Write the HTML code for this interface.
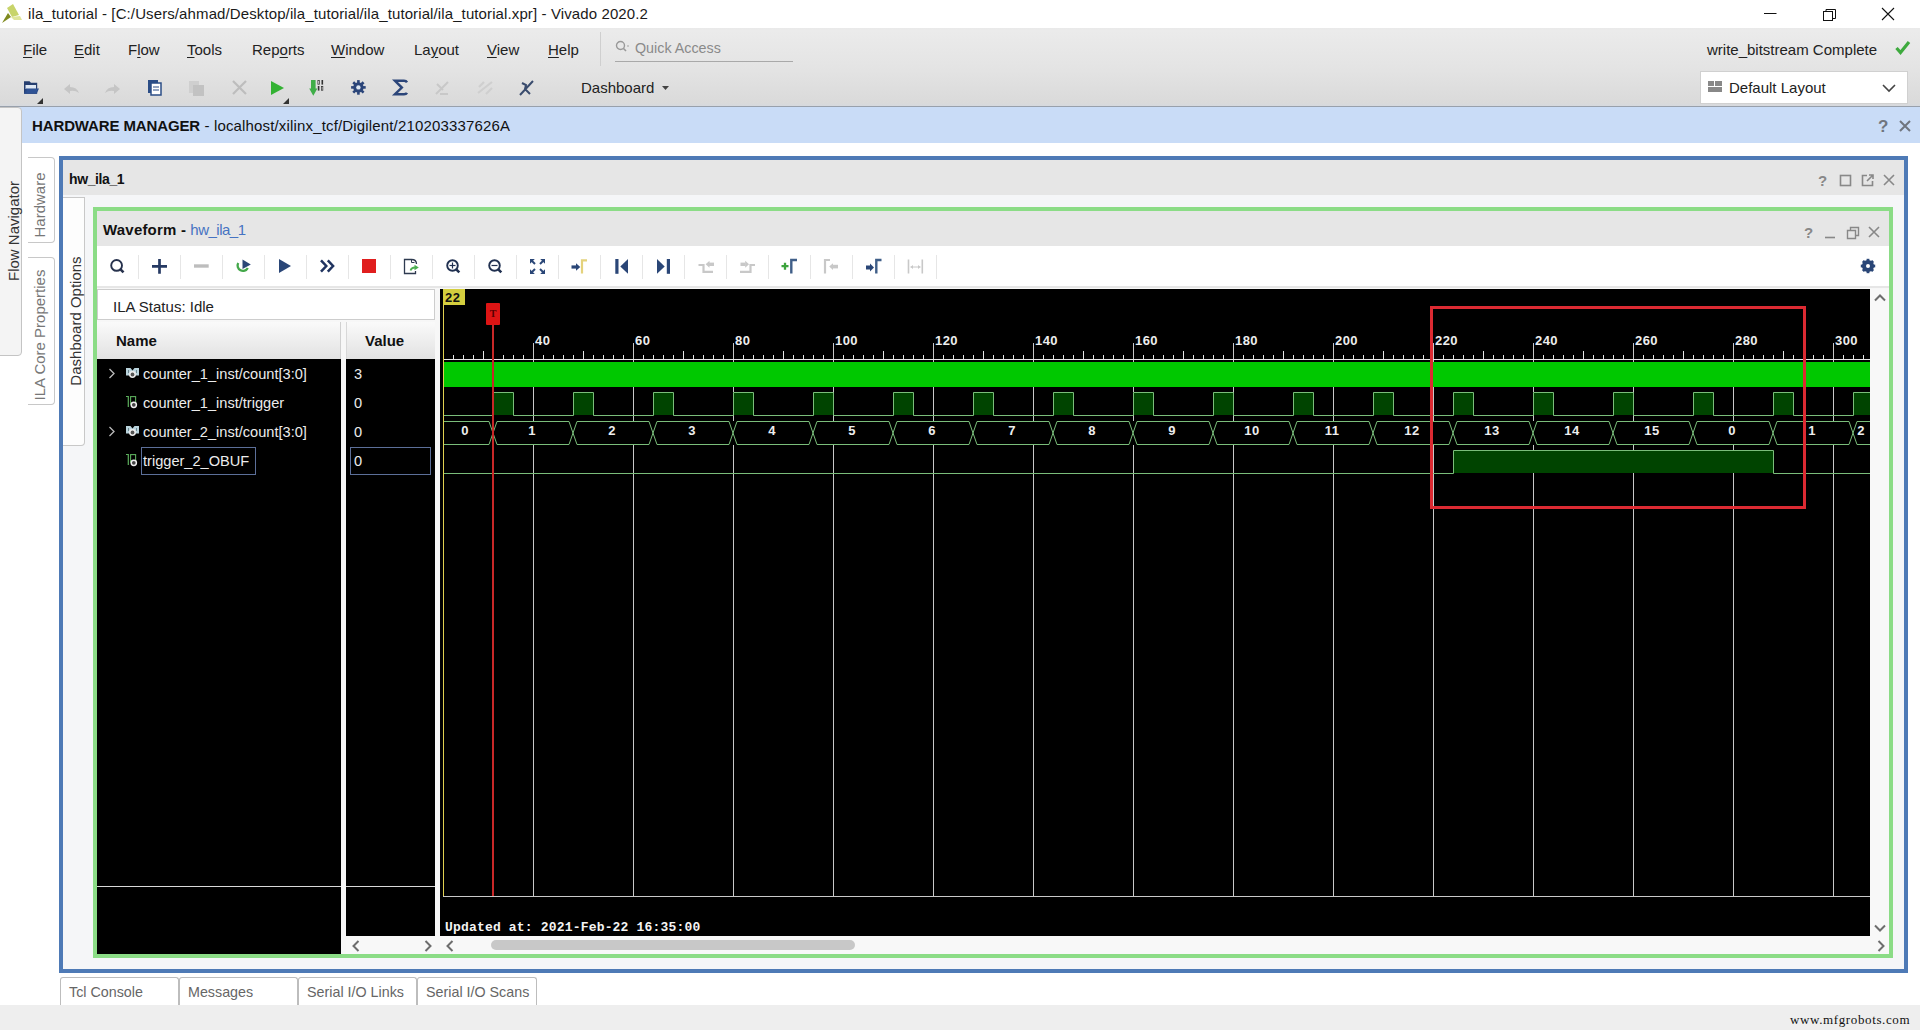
<!DOCTYPE html>
<html><head><meta charset="utf-8">
<style>
*{margin:0;padding:0;box-sizing:border-box}
html,body{width:1920px;height:1030px;overflow:hidden;background:#fff;font-family:"Liberation Sans",sans-serif;color:#222}
.a{position:absolute}
.t{position:absolute;white-space:nowrap;line-height:1}
svg{position:absolute;overflow:visible}
.m{font-size:15px;color:#222}
.u{text-decoration:underline;text-underline-offset:2px}
</style></head><body>

<div class="a" style="left:0;top:0;width:1920px;height:28px;background:#fff"></div>
<svg style="left:0;top:0" width="24" height="28"><path d="M2 23 L8 13 L11 17 Z" fill="#7f8a1e"/><path d="M7 8 L13 4 L19 15 L12 17 Z" fill="#c8d46a"/><path d="M11 17 L20 16 L22 20 L14 20Z" fill="#dfe59a"/></svg>
<div class="t" style="left:28px;top:6px;font-size:15px;letter-spacing:0.11px;color:#1a1a1a">ila_tutorial - [C:/Users/ahmad/Desktop/ila_tutorial/ila_tutorial/ila_tutorial.xpr] - Vivado 2020.2</div>
<svg style="left:1763px;top:7px" width="140" height="14"><path d="M1 6.5 H13.5" stroke="#111" stroke-width="1"/><rect x="60.5" y="4.5" width="9" height="9" fill="none" stroke="#111"/><path d="M63 4.5 V2.5 H72.5 V11.5 H70" fill="none" stroke="#111"/><path d="M119 1 L131 13 M131 1 L119 13" stroke="#111" stroke-width="1.1"/></svg>
<div class="a" style="left:0;top:28px;width:1920px;height:79px;background:linear-gradient(#e9e9e9,#ebebeb 3%,#e4e4e4 50%,#dadada 96%,#d6d9de);border-bottom:1px solid #98a0ab"></div>
<div class="t m" style="left:23px;top:42px"><span class="u">F</span>ile</div>
<div class="t m" style="left:74px;top:42px"><span class="u">E</span>dit</div>
<div class="t m" style="left:128px;top:42px">F<span class="u">l</span>ow</div>
<div class="t m" style="left:187px;top:42px"><span class="u">T</span>ools</div>
<div class="t m" style="left:252px;top:42px">Rep<span class="u">o</span>rts</div>
<div class="t m" style="left:331px;top:42px"><span class="u">W</span>indow</div>
<div class="t m" style="left:414px;top:42px">La<span class="u">y</span>out</div>
<div class="t m" style="left:487px;top:42px"><span class="u">V</span>iew</div>
<div class="t m" style="left:548px;top:42px"><span class="u">H</span>elp</div>
<div class="a" style="left:600px;top:32px;width:1px;height:34px;background:#cfcfcf"></div>
<svg style="left:615px;top:40px" width="14" height="14"><circle cx="5.5" cy="5.5" r="4" fill="none" stroke="#999" stroke-width="1.4"/><path d="M8.5 8.5 L11 11" stroke="#999" stroke-width="1.6"/><circle cx="13" cy="6" r="0.8" fill="#999"/></svg>
<div class="t" style="left:635px;top:40.5px;font-size:14.3px;color:#8a8a8a">Quick Access</div>
<div class="a" style="left:615px;top:61px;width:178px;height:1px;background:#a9a9a9"></div>
<div class="t" style="left:1707px;top:42px;font-size:15px;color:#222">write_bitstream Complete</div>
<svg style="left:1895px;top:40px" width="16" height="16"><path d="M1.5 8 L5.5 12.5 L14 2" fill="none" stroke="#3eaa3e" stroke-width="3.2"/></svg>
<div class="a" style="left:1700px;top:71px;width:208px;height:33px;background:#fff;border:1px solid #d0d0d0"></div>
<svg style="left:1708px;top:81px" width="14" height="12"><rect x="0" y="0" width="6" height="5" fill="#888"/><rect x="7" y="0" width="7" height="5" fill="#888"/><rect x="0" y="6" width="14" height="5" fill="#888"/></svg>
<div class="t" style="left:1729px;top:80px;font-size:15px;color:#222">Default Layout</div>
<svg style="left:1882px;top:83px" width="14" height="10"><path d="M1 2 L7 8 L13 2" fill="none" stroke="#444" stroke-width="1.6"/></svg>
<svg style="left:0;top:70px" width="560" height="36">
<g transform="translate(0,0)">
<path d="M24 11.2 h5.5 l1.5 1.5 h6.2 v11 h-13.2z" fill="#263f70"/><rect x="25.5" y="15" width="10.5" height="4" fill="#dfe8f4"/><path d="M26 18.4 h13 l-2.4 5.4 h-12.6z" fill="#2a4c8c"/><path d="M27 20h10M26.5 22h10" stroke="#3b62a8" stroke-width="0.7"/>
<path d="M37 34 L43 28 V34Z" fill="#333"/>
<path d="M64 19 L70 14 V17 Q77 17 79 23 Q75 20 70 21 V24Z" fill="#c5c5c5"/>
<path d="M120 19 L114 14 V17 Q107 17 105 23 Q109 20 114 21 V24Z" fill="#c5c5c5"/>
<rect x="148" y="10" width="10" height="13" fill="#2b4d86"/><rect x="151" y="13" width="10" height="12" fill="#fff" stroke="#2b4d86" stroke-width="1.5"/><path d="M153 17h6M153 20h6" stroke="#2b4d86"/>
<rect x="189" y="11" width="10" height="12" fill="#cfcfcf"/><rect x="193" y="15" width="11" height="11" fill="#c2c2c2"/>
<path d="M233 11 L246 24 M246 11 L233 24" stroke="#bdbdbd" stroke-width="2.2"/>
<path d="M271 11 L284 18 L271 25Z" fill="#33b233"/>
<path d="M283 34 L289 28 V34Z" fill="#333"/>
<path d="M311 10 h4.6 v8.5 h1.8 l-4.1 7.3 l-4.1 -7.3 h1.8z" fill="#3fae48"/>
<g fill="#333"><rect x="317.5" y="10" width="2.2" height="4.6"/><rect x="318.2" y="10.8" width="0.8" height="3" fill="#ddd"/><rect x="321.5" y="10" width="1.6" height="4.6"/><rect x="317.8" y="16" width="1.6" height="4.6"/><rect x="321" y="16" width="2.2" height="4.6"/><rect x="321.7" y="16.8" width="0.8" height="3" fill="#ddd"/></g>
<g transform="translate(358.4,17.4)"><circle r="5.2" fill="#2b4579"/><g fill="#2b4579"><rect x="-1.3" y="-7.3" width="2.6" height="14.6"/><rect x="-1.3" y="-7.3" width="2.6" height="14.6" transform="rotate(45)"/><rect x="-1.3" y="-7.3" width="2.6" height="14.6" transform="rotate(90)"/><rect x="-1.3" y="-7.3" width="2.6" height="14.6" transform="rotate(135)"/></g><circle r="2.2" fill="#dde7f2"/></g>
<path d="M407 12.3 Q406.2 10.8 404 10.8 H395 L401.8 17.6 L395 24.2 H404 Q406.2 24.2 407 22.8" fill="none" stroke="#2b4579" stroke-width="2.5" stroke-linejoin="miter"/>
<path d="M436 24 L448 12 M437 14 l6 6 M440 24 h8" stroke="#c8c8c8" stroke-width="2"/>
<path d="M478 23 L492 12 M479 17 l5 -5 M486 24 l6 -6" stroke="#cfcfcf" stroke-width="2.2"/>
<path d="M520 25 L533 11 M522 13 l4 2 l-1 4 l5 5" fill="none" stroke="#3a4c6e" stroke-width="2"/>
</g></svg>
<div class="t" style="left:581px;top:80px;font-size:15px;color:#222">Dashboard</div>
<svg style="left:662px;top:86px" width="8" height="5"><path d="M0 0 H7 L3.5 4Z" fill="#444"/></svg>
<div class="a" style="left:0;top:107px;width:1920px;height:36px;background:#c9dcf7"></div>
<div class="t" style="left:32px;top:117.5px;font-size:15px;letter-spacing:0.16px;color:#111"><b style="letter-spacing:-0.12px">HARDWARE MANAGER</b> - localhost/xilinx_tcf/Digilent/210203337626A</div>
<div class="t" style="left:1878px;top:118px;font-size:17px;color:#70757e;font-weight:bold">?</div>
<svg style="left:1899px;top:120px" width="12" height="12"><path d="M1 1 L11 11 M11 1 L1 11" stroke="#70757e" stroke-width="2"/></svg>
<div class="a" style="left:0;top:143px;width:1920px;height:862px;background:#fff"></div>
<div class="a" style="left:-4px;top:107px;width:26px;height:249px;background:#f4f4f4;border:1px solid #c4c4c4;border-radius:0 4px 4px 0"></div>
<div class="t" style="left:13px;top:231px;font-size:15px;color:#333;transform:translate(-50%,-50%) rotate(-90deg);transform-origin:center">Flow Navigator</div>
<div class="a" style="left:28px;top:157px;width:27px;height:86px;background:#fff;border:1px solid #c8c8c8;border-left:none;border-radius:0 4px 4px 0"></div>
<div class="t" style="left:39px;top:205px;font-size:15px;color:#777;transform:translate(-50%,-50%) rotate(-90deg)">Hardware</div>
<div class="a" style="left:28px;top:257px;width:27px;height:148px;background:#fff;border:1px solid #c8c8c8;border-left:none;border-radius:0 4px 4px 0"></div>
<div class="t" style="left:39px;top:335px;font-size:15px;color:#777;transform:translate(-50%,-50%) rotate(-90deg)">ILA Core Properties</div>
<div class="a" style="left:59px;top:156px;width:1849px;height:817px;border:4px solid #4e7ab6;background:#f5f6f8"></div>
<div class="a" style="left:63px;top:160px;width:1841px;height:35px;background:#e6e6e6"></div>
<div class="t" style="left:69px;top:172px;font-size:14px;letter-spacing:-0.4px;color:#111;font-weight:bold">hw_ila_1</div>
<svg style="left:1812px;top:172px" width="90" height="16">
<text x="6" y="14" font-family="Liberation Sans" font-size="15" font-weight="bold" fill="#888">?</text>
<rect x="28.5" y="3.5" width="10" height="10" fill="none" stroke="#888" stroke-width="1.6"/>
<path d="M55 3.5 H50.5 V13.5 H60.5 V9 M55 9 L61 3 M57 3 H61 V7" fill="none" stroke="#888" stroke-width="1.6"/>
<path d="M72 3 L82 13 M82 3 L72 13" stroke="#888" stroke-width="1.6"/>
</svg>
<div class="a" style="left:63px;top:197px;width:22px;height:249px;background:#fdfdfd;border:1px solid #c8c8c8;border-left:none;border-radius:0 0 4px 0"></div>
<div class="t" style="left:75px;top:321px;font-size:15px;color:#333;transform:translate(-50%,-50%) rotate(-90deg)">Dashboard Options</div>
<div class="a" style="left:93px;top:207px;width:1800px;height:751px;border:4px solid #8bdc86;background:#f7f7f7"></div>
<div class="a" style="left:97px;top:211px;width:1792px;height:35px;background:#e6e6e6"></div>
<div class="t" style="left:103px;top:222px;font-size:15px;color:#111"><b style="letter-spacing:0.2px">Waveform -</b> <span style="color:#4673c2;letter-spacing:-0.5px">hw_ila_1</span></div>
<svg style="left:1800px;top:224px" width="90" height="16">
<text x="4" y="14" font-family="Liberation Sans" font-size="15" font-weight="bold" fill="#888">?</text>
<path d="M25 13.5 H35" stroke="#888" stroke-width="1.6"/>
<path d="M47.5 6.5 H55.5 V14.5 H47.5Z M50.5 6.5 V3.5 H58.5 V11.5 H55.5" fill="none" stroke="#888" stroke-width="1.4"/>
<path d="M69 3 L79 13 M79 3 L69 13" stroke="#888" stroke-width="1.6"/>
</svg>
<div class="a" style="left:97px;top:246px;width:1792px;height:42px;background:#fff"></div>
<div class="a" style="left:97px;top:286px;width:1792px;height:2px;background:#e6e6e6"></div>
<svg style="left:97px;top:246px" width="1792" height="42">
<rect x="41" y="9" width="1" height="24" fill="#e6e6e6"/>
<rect x="83" y="9" width="1" height="24" fill="#e6e6e6"/>
<rect x="125" y="9" width="1" height="24" fill="#e6e6e6"/>
<rect x="167" y="9" width="1" height="24" fill="#e6e6e6"/>
<rect x="209" y="9" width="1" height="24" fill="#e6e6e6"/>
<rect x="251" y="9" width="1" height="24" fill="#e6e6e6"/>
<rect x="293" y="9" width="1" height="24" fill="#e6e6e6"/>
<rect x="335" y="9" width="1" height="24" fill="#e6e6e6"/>
<rect x="377" y="9" width="1" height="24" fill="#e6e6e6"/>
<rect x="419" y="9" width="1" height="24" fill="#e6e6e6"/>
<rect x="461" y="9" width="1" height="24" fill="#e6e6e6"/>
<rect x="503" y="9" width="1" height="24" fill="#e6e6e6"/>
<rect x="545" y="9" width="1" height="24" fill="#e6e6e6"/>
<rect x="587" y="9" width="1" height="24" fill="#e6e6e6"/>
<rect x="629" y="9" width="1" height="24" fill="#e6e6e6"/>
<rect x="671" y="9" width="1" height="24" fill="#e6e6e6"/>
<rect x="713" y="9" width="1" height="24" fill="#e6e6e6"/>
<rect x="755" y="9" width="1" height="24" fill="#e6e6e6"/>
<rect x="797" y="9" width="1" height="24" fill="#e6e6e6"/>
<rect x="839" y="9" width="1" height="24" fill="#e6e6e6"/>
<circle cx="19.599999999999994" cy="19.4" r="5.4" fill="none" stroke="#27324d" stroke-width="1.9"/><path d="M23.5 23.3 L26.5 26.3" stroke="#27324d" stroke-width="2.6"/>
<path d="M55 20.3 H70 M62.5 13 V27.8" stroke="#263a63" stroke-width="2.7"/>
<path d="M97 20 H111.69999999999999" stroke="#bdbdbd" stroke-width="3.4"/>
<path d="M141.2 17 A4.9 4.9 0 0 0 150.8 22" fill="none" stroke="#44a84a" stroke-width="2.3"/><path d="M145.5 13.5 L153.8 18.5 L145.5 23Z" fill="#2a4677"/>
<path d="M182 13 L194 20 L182 27Z" fill="#2a4677"/>
<path d="M224 14.3 L229.3 20 L224 25.7 M230.8 14.3 L236.10000000000002 20 L230.8 25.7" fill="none" stroke="#203460" stroke-width="2.5"/>
<rect x="265" y="13" width="14" height="14" fill="#e01e1e"/>
<path d="M318.5 25 V27.5 H307.5 V13.5 H314.5 Q319.5 13.5 319.5 18" fill="none" stroke="#2e3a50" stroke-width="1.3"/><path d="M314.5 13.5 V16.5 H317.5" fill="none" stroke="#2e3a50" stroke-width="1"/><path d="M313.5 24.5 Q314.5 21.5 318 21.5" fill="none" stroke="#4caf50" stroke-width="1.8"/><path d="M317.5 18.8 L321.8 21.5 L317.5 24.2Z" fill="#4caf50"/>
<circle cx="355.5" cy="19.5" r="5.3" fill="none" stroke="#203050" stroke-width="1.9"/><path d="M359.3 23.3 L362.3 26.3" stroke="#203050" stroke-width="2.6"/><path d="M352.5 19.5 H358.5" stroke="#203050" stroke-width="1.2"/>
<path d="M355.5 16.5 V22.5" stroke="#203050" stroke-width="1.2"/>
<circle cx="397.5" cy="19.5" r="5.3" fill="none" stroke="#203050" stroke-width="1.9"/><path d="M401.3 23.3 L404.3 26.3" stroke="#203050" stroke-width="2.6"/><path d="M394.5 19.5 H400.5" stroke="#203050" stroke-width="1.2"/>
<path d="M433 13 L437.79999999999995 13 L433 17.8Z" fill="#2a4677"/><path d="M434.5 14.5 L438 18" stroke="#2a4677" stroke-width="2"/>
<path d="M448 13 L443.20000000000005 13 L448 17.8Z" fill="#2a4677"/><path d="M446.5 14.5 L443 18" stroke="#2a4677" stroke-width="2"/>
<path d="M433 28 L437.79999999999995 28 L433 23.2Z" fill="#2a4677"/><path d="M434.5 26.5 L438 23" stroke="#2a4677" stroke-width="2"/>
<path d="M448 28 L443.20000000000005 28 L448 23.2Z" fill="#2a4677"/><path d="M446.5 26.5 L443 23" stroke="#2a4677" stroke-width="2"/>
<path d="M474.5 21 H480" stroke="#2a4677" stroke-width="3.2"/><path d="M479 17.3 L483.29999999999995 21 L479 24.7Z" fill="#2a4677"/><path d="M485 27.5 V14.3 H490" fill="none" stroke="#e4d27c" stroke-width="2.2"/>
<rect x="518.3" y="13" width="3.2" height="14.8" fill="#2a4677"/><path d="M531 13 L523.3 20.4 L531 27.8Z" fill="#2a4677"/>
<rect x="569.8" y="13" width="3.2" height="14.8" fill="#2a4677"/><path d="M560 13 L567.7 20.4 L560 27.8Z" fill="#2a4677"/>
<path d="M601.5 19 H606.5 V25.80000000000001 H616" fill="none" stroke="#c8c8c8" stroke-width="2.2"/><rect x="612" y="16.600000000000023" width="5" height="3.4" fill="#c8c8c8"/><path d="M608.6 18.30000000000001 L612.5 14.800000000000011 L612.5 21.80000000000001Z" fill="#c8c8c8"/>
<path d="M643 25.80000000000001 H653.5 V19 H658" fill="none" stroke="#c8c8c8" stroke-width="2.2"/><rect x="643.5" y="16.600000000000023" width="5" height="3.4" fill="#c8c8c8"/><path d="M652 18.30000000000001 L648.2 14.800000000000011 L648.2 21.80000000000001Z" fill="#c8c8c8"/>
<path d="M684.5 20.19999999999999 H691.5 M688 16.69999999999999 V23.69999999999999" stroke="#3ca33c" stroke-width="2.3"/><path d="M694.3 27.600000000000023 V14 H700" fill="none" stroke="#3f5e88" stroke-width="2.4"/>
<path d="M728 27.600000000000023 V14 H733" fill="none" stroke="#c8c8c8" stroke-width="2.2"/><rect x="735.5" y="18.80000000000001" width="5.5" height="3.6" fill="#c8c8c8"/><path d="M732.2 20.600000000000023 L736 17.19999999999999 L736 24Z" fill="#c8c8c8"/>
<rect x="769" y="19.5" width="4.5" height="4" fill="#2a4677"/><path d="M773 17.5 L777 21.5 L773 25.5Z" fill="#2a4677"/><path d="M779.3 27.600000000000023 V14 H784.5" fill="none" stroke="#3f5e88" stroke-width="2.4"/>
<path d="M811.5 13.5 V27.5 M825.3 13.5 V27.5" stroke="#c8c8c8" stroke-width="1.6"/><path d="M813.5 21 H823.5" stroke="#c8c8c8" stroke-width="1"/><path d="M813.5 21 l2.5 -2 v4z M823.5 21 l-2.5 -2 v4z" fill="#c8c8c8"/>
<g transform="translate(1771,20)"><circle r="4.6" fill="none" stroke="#2a4677" stroke-width="3"/><g fill="#2a4677"><rect x="-1.4" y="-7.2" width="2.8" height="14.4"/><rect x="-1.4" y="-7.2" width="2.8" height="14.4" transform="rotate(45)"/><rect x="-1.4" y="-7.2" width="2.8" height="14.4" transform="rotate(90)"/><rect x="-1.4" y="-7.2" width="2.8" height="14.4" transform="rotate(135)"/></g><circle r="2" fill="#fff"/></g>
</svg>
<div class="a" style="left:97px;top:289px;width:338px;height:31px;background:#fff;border:1px solid #cdcdcd"></div>
<div class="t" style="left:113px;top:299px;font-size:15px;color:#222">ILA Status: Idle</div>
<div class="a" style="left:97px;top:322px;width:244px;height:37px;background:linear-gradient(#fafafa,#e2e2e2);border-right:1px solid #d0d0d0"></div>
<div class="a" style="left:346px;top:322px;width:89px;height:37px;background:linear-gradient(#fafafa,#e2e2e2);border-left:1px solid #d8d8d8"></div>
<div class="t" style="left:116px;top:333px;font-size:15px;color:#111;font-weight:bold">Name</div>
<div class="t" style="left:365px;top:333px;font-size:15px;color:#111;font-weight:bold">Value</div>
<div class="a" style="left:97px;top:359px;width:244px;height:595px;background:#000"></div>
<div class="a" style="left:346px;top:359px;width:89px;height:577px;background:#000"></div>
<div class="a" style="left:97px;top:886px;width:244px;height:1px;background:#d8d8d8"></div>
<div class="a" style="left:346px;top:886px;width:89px;height:1px;background:#d8d8d8"></div>
<svg style="left:108px;top:368px" width="8" height="12"><path d="M1.5 1 L6 5.5 L1.5 10" fill="none" stroke="#bbb" stroke-width="1.3"/></svg>
<svg style="left:120px;top:364px" width="22" height="18"><path d="M6 4 h4.5 l2 2.6 l2 -2.6 h4.5 v7.5 h-13z" fill="#b9d3dc"/><path d="M8.5 6 v3 M16.5 6 v3" stroke="#6d8790" stroke-width="1"/><circle cx="12.5" cy="10.5" r="2.7" fill="#555" stroke="#eee" stroke-width="1.5"/></svg>
<div class="t" style="left:143px;top:367px;font-size:14.6px;color:#ececec">counter_1_inst/count[3:0]</div>
<div class="t" style="left:354px;top:367px;font-size:14.6px;color:#ececec">3</div>
<svg style="left:120px;top:393px" width="22" height="18"><path d="M6 3.5 h2.3 v10.5" fill="none" stroke="#5cae5c" stroke-width="1.2"/><rect x="10.6" y="3.6" width="5" height="7.5" fill="none" stroke="#5cae5c" stroke-width="1.1"/><circle cx="13.8" cy="11.8" r="2.6" fill="#444" stroke="#eee" stroke-width="1.5"/></svg>
<div class="t" style="left:143px;top:396px;font-size:14.6px;color:#ececec">counter_1_inst/trigger</div>
<div class="t" style="left:354px;top:396px;font-size:14.6px;color:#ececec">0</div>
<svg style="left:108px;top:426px" width="8" height="12"><path d="M1.5 1 L6 5.5 L1.5 10" fill="none" stroke="#bbb" stroke-width="1.3"/></svg>
<svg style="left:120px;top:422px" width="22" height="18"><path d="M6 4 h4.5 l2 2.6 l2 -2.6 h4.5 v7.5 h-13z" fill="#b9d3dc"/><path d="M8.5 6 v3 M16.5 6 v3" stroke="#6d8790" stroke-width="1"/><circle cx="12.5" cy="10.5" r="2.7" fill="#555" stroke="#eee" stroke-width="1.5"/></svg>
<div class="t" style="left:143px;top:425px;font-size:14.6px;color:#ececec">counter_2_inst/count[3:0]</div>
<div class="t" style="left:354px;top:425px;font-size:14.6px;color:#ececec">0</div>
<svg style="left:120px;top:451px" width="22" height="18"><path d="M6 3.5 h2.3 v10.5" fill="none" stroke="#5cae5c" stroke-width="1.2"/><rect x="10.6" y="3.6" width="5" height="7.5" fill="none" stroke="#5cae5c" stroke-width="1.1"/><circle cx="13.8" cy="11.8" r="2.6" fill="#444" stroke="#eee" stroke-width="1.5"/></svg>
<div class="t" style="left:143px;top:454px;font-size:14.6px;color:#ececec">trigger_2_OBUF</div>
<div class="t" style="left:354px;top:454px;font-size:14.6px;color:#ececec">0</div>
<div class="a" style="left:141px;top:447px;width:115px;height:28px;border:1px solid #5c6f99"></div>
<div class="a" style="left:350px;top:447px;width:81px;height:28px;border:1px solid #5c6f99"></div>
<div class="a" style="left:346px;top:936px;width:89px;height:18px;background:#f8f8f8"></div>
<div class="a" style="left:440px;top:936px;width:1449px;height:18px;background:#f8f8f8"></div>
<div class="a" style="left:1870px;top:289px;width:19px;height:647px;background:#f8f8f8"></div>
<svg style="left:352px;top:940px" width="8" height="12"><path d="M6.5 1 L1.5 6 L6.5 11" fill="none" stroke="#6d6d6d" stroke-width="2"/></svg>
<svg style="left:424px;top:940px" width="8" height="12"><path d="M1.5 1 L6.5 6 L1.5 11" fill="none" stroke="#6d6d6d" stroke-width="2"/></svg>
<svg style="left:446px;top:940px" width="8" height="12"><path d="M6.5 1 L1.5 6 L6.5 11" fill="none" stroke="#6d6d6d" stroke-width="2"/></svg>
<svg style="left:1877px;top:940px" width="8" height="12"><path d="M1.5 1 L6.5 6 L1.5 11" fill="none" stroke="#6d6d6d" stroke-width="2"/></svg>
<svg style="left:1874px;top:294px" width="12" height="8"><path d="M1 6.5 L6 1.5 L11 6.5" fill="none" stroke="#6d6d6d" stroke-width="2"/></svg>
<svg style="left:1874px;top:924px" width="12" height="8"><path d="M1 1.5 L6 6.5 L11 1.5" fill="none" stroke="#6d6d6d" stroke-width="2"/></svg>
<div class="a" style="left:491px;top:940px;width:364px;height:10px;background:#c8c8c8;border-radius:5px"></div>
<svg style="left:440px;top:289px" width="1430" height="647" viewBox="440 289 1430 647">
<defs><clipPath id="wc"><rect x="440" y="289" width="1430" height="647"/></clipPath></defs>
<rect x="440" y="289" width="1430" height="647" fill="#000"/>
<g clip-path="url(#wc)">
<rect x="533" y="343" width="1" height="553" fill="#c8c8c8"/>
<rect x="633" y="343" width="1" height="553" fill="#c8c8c8"/>
<rect x="733" y="343" width="1" height="553" fill="#c8c8c8"/>
<rect x="833" y="343" width="1" height="553" fill="#c8c8c8"/>
<rect x="933" y="343" width="1" height="553" fill="#c8c8c8"/>
<rect x="1033" y="343" width="1" height="553" fill="#c8c8c8"/>
<rect x="1133" y="343" width="1" height="553" fill="#c8c8c8"/>
<rect x="1233" y="343" width="1" height="553" fill="#c8c8c8"/>
<rect x="1333" y="343" width="1" height="553" fill="#c8c8c8"/>
<rect x="1433" y="343" width="1" height="553" fill="#c8c8c8"/>
<rect x="1533" y="343" width="1" height="553" fill="#c8c8c8"/>
<rect x="1633" y="343" width="1" height="553" fill="#c8c8c8"/>
<rect x="1733" y="343" width="1" height="553" fill="#c8c8c8"/>
<rect x="1833" y="343" width="1" height="553" fill="#c8c8c8"/>
<rect x="443" y="359" width="1427" height="1" fill="#e8e8e8"/>
<rect x="443" y="355" width="1" height="4" fill="#e8e8e8"/>
<rect x="453" y="355" width="1" height="4" fill="#e8e8e8"/>
<rect x="463" y="355" width="1" height="4" fill="#e8e8e8"/>
<rect x="473" y="355" width="1" height="4" fill="#e8e8e8"/>
<rect x="483" y="351" width="1" height="8" fill="#e8e8e8"/>
<rect x="493" y="355" width="1" height="4" fill="#e8e8e8"/>
<rect x="503" y="355" width="1" height="4" fill="#e8e8e8"/>
<rect x="513" y="355" width="1" height="4" fill="#e8e8e8"/>
<rect x="523" y="355" width="1" height="4" fill="#e8e8e8"/>
<rect x="543" y="355" width="1" height="4" fill="#e8e8e8"/>
<rect x="553" y="355" width="1" height="4" fill="#e8e8e8"/>
<rect x="563" y="355" width="1" height="4" fill="#e8e8e8"/>
<rect x="573" y="355" width="1" height="4" fill="#e8e8e8"/>
<rect x="583" y="351" width="1" height="8" fill="#e8e8e8"/>
<rect x="593" y="355" width="1" height="4" fill="#e8e8e8"/>
<rect x="603" y="355" width="1" height="4" fill="#e8e8e8"/>
<rect x="613" y="355" width="1" height="4" fill="#e8e8e8"/>
<rect x="623" y="355" width="1" height="4" fill="#e8e8e8"/>
<rect x="643" y="355" width="1" height="4" fill="#e8e8e8"/>
<rect x="653" y="355" width="1" height="4" fill="#e8e8e8"/>
<rect x="663" y="355" width="1" height="4" fill="#e8e8e8"/>
<rect x="673" y="355" width="1" height="4" fill="#e8e8e8"/>
<rect x="683" y="351" width="1" height="8" fill="#e8e8e8"/>
<rect x="693" y="355" width="1" height="4" fill="#e8e8e8"/>
<rect x="703" y="355" width="1" height="4" fill="#e8e8e8"/>
<rect x="713" y="355" width="1" height="4" fill="#e8e8e8"/>
<rect x="723" y="355" width="1" height="4" fill="#e8e8e8"/>
<rect x="743" y="355" width="1" height="4" fill="#e8e8e8"/>
<rect x="753" y="355" width="1" height="4" fill="#e8e8e8"/>
<rect x="763" y="355" width="1" height="4" fill="#e8e8e8"/>
<rect x="773" y="355" width="1" height="4" fill="#e8e8e8"/>
<rect x="783" y="351" width="1" height="8" fill="#e8e8e8"/>
<rect x="793" y="355" width="1" height="4" fill="#e8e8e8"/>
<rect x="803" y="355" width="1" height="4" fill="#e8e8e8"/>
<rect x="813" y="355" width="1" height="4" fill="#e8e8e8"/>
<rect x="823" y="355" width="1" height="4" fill="#e8e8e8"/>
<rect x="843" y="355" width="1" height="4" fill="#e8e8e8"/>
<rect x="853" y="355" width="1" height="4" fill="#e8e8e8"/>
<rect x="863" y="355" width="1" height="4" fill="#e8e8e8"/>
<rect x="873" y="355" width="1" height="4" fill="#e8e8e8"/>
<rect x="883" y="351" width="1" height="8" fill="#e8e8e8"/>
<rect x="893" y="355" width="1" height="4" fill="#e8e8e8"/>
<rect x="903" y="355" width="1" height="4" fill="#e8e8e8"/>
<rect x="913" y="355" width="1" height="4" fill="#e8e8e8"/>
<rect x="923" y="355" width="1" height="4" fill="#e8e8e8"/>
<rect x="943" y="355" width="1" height="4" fill="#e8e8e8"/>
<rect x="953" y="355" width="1" height="4" fill="#e8e8e8"/>
<rect x="963" y="355" width="1" height="4" fill="#e8e8e8"/>
<rect x="973" y="355" width="1" height="4" fill="#e8e8e8"/>
<rect x="983" y="351" width="1" height="8" fill="#e8e8e8"/>
<rect x="993" y="355" width="1" height="4" fill="#e8e8e8"/>
<rect x="1003" y="355" width="1" height="4" fill="#e8e8e8"/>
<rect x="1013" y="355" width="1" height="4" fill="#e8e8e8"/>
<rect x="1023" y="355" width="1" height="4" fill="#e8e8e8"/>
<rect x="1043" y="355" width="1" height="4" fill="#e8e8e8"/>
<rect x="1053" y="355" width="1" height="4" fill="#e8e8e8"/>
<rect x="1063" y="355" width="1" height="4" fill="#e8e8e8"/>
<rect x="1073" y="355" width="1" height="4" fill="#e8e8e8"/>
<rect x="1083" y="351" width="1" height="8" fill="#e8e8e8"/>
<rect x="1093" y="355" width="1" height="4" fill="#e8e8e8"/>
<rect x="1103" y="355" width="1" height="4" fill="#e8e8e8"/>
<rect x="1113" y="355" width="1" height="4" fill="#e8e8e8"/>
<rect x="1123" y="355" width="1" height="4" fill="#e8e8e8"/>
<rect x="1143" y="355" width="1" height="4" fill="#e8e8e8"/>
<rect x="1153" y="355" width="1" height="4" fill="#e8e8e8"/>
<rect x="1163" y="355" width="1" height="4" fill="#e8e8e8"/>
<rect x="1173" y="355" width="1" height="4" fill="#e8e8e8"/>
<rect x="1183" y="351" width="1" height="8" fill="#e8e8e8"/>
<rect x="1193" y="355" width="1" height="4" fill="#e8e8e8"/>
<rect x="1203" y="355" width="1" height="4" fill="#e8e8e8"/>
<rect x="1213" y="355" width="1" height="4" fill="#e8e8e8"/>
<rect x="1223" y="355" width="1" height="4" fill="#e8e8e8"/>
<rect x="1243" y="355" width="1" height="4" fill="#e8e8e8"/>
<rect x="1253" y="355" width="1" height="4" fill="#e8e8e8"/>
<rect x="1263" y="355" width="1" height="4" fill="#e8e8e8"/>
<rect x="1273" y="355" width="1" height="4" fill="#e8e8e8"/>
<rect x="1283" y="351" width="1" height="8" fill="#e8e8e8"/>
<rect x="1293" y="355" width="1" height="4" fill="#e8e8e8"/>
<rect x="1303" y="355" width="1" height="4" fill="#e8e8e8"/>
<rect x="1313" y="355" width="1" height="4" fill="#e8e8e8"/>
<rect x="1323" y="355" width="1" height="4" fill="#e8e8e8"/>
<rect x="1343" y="355" width="1" height="4" fill="#e8e8e8"/>
<rect x="1353" y="355" width="1" height="4" fill="#e8e8e8"/>
<rect x="1363" y="355" width="1" height="4" fill="#e8e8e8"/>
<rect x="1373" y="355" width="1" height="4" fill="#e8e8e8"/>
<rect x="1383" y="351" width="1" height="8" fill="#e8e8e8"/>
<rect x="1393" y="355" width="1" height="4" fill="#e8e8e8"/>
<rect x="1403" y="355" width="1" height="4" fill="#e8e8e8"/>
<rect x="1413" y="355" width="1" height="4" fill="#e8e8e8"/>
<rect x="1423" y="355" width="1" height="4" fill="#e8e8e8"/>
<rect x="1443" y="355" width="1" height="4" fill="#e8e8e8"/>
<rect x="1453" y="355" width="1" height="4" fill="#e8e8e8"/>
<rect x="1463" y="355" width="1" height="4" fill="#e8e8e8"/>
<rect x="1473" y="355" width="1" height="4" fill="#e8e8e8"/>
<rect x="1483" y="351" width="1" height="8" fill="#e8e8e8"/>
<rect x="1493" y="355" width="1" height="4" fill="#e8e8e8"/>
<rect x="1503" y="355" width="1" height="4" fill="#e8e8e8"/>
<rect x="1513" y="355" width="1" height="4" fill="#e8e8e8"/>
<rect x="1523" y="355" width="1" height="4" fill="#e8e8e8"/>
<rect x="1543" y="355" width="1" height="4" fill="#e8e8e8"/>
<rect x="1553" y="355" width="1" height="4" fill="#e8e8e8"/>
<rect x="1563" y="355" width="1" height="4" fill="#e8e8e8"/>
<rect x="1573" y="355" width="1" height="4" fill="#e8e8e8"/>
<rect x="1583" y="351" width="1" height="8" fill="#e8e8e8"/>
<rect x="1593" y="355" width="1" height="4" fill="#e8e8e8"/>
<rect x="1603" y="355" width="1" height="4" fill="#e8e8e8"/>
<rect x="1613" y="355" width="1" height="4" fill="#e8e8e8"/>
<rect x="1623" y="355" width="1" height="4" fill="#e8e8e8"/>
<rect x="1643" y="355" width="1" height="4" fill="#e8e8e8"/>
<rect x="1653" y="355" width="1" height="4" fill="#e8e8e8"/>
<rect x="1663" y="355" width="1" height="4" fill="#e8e8e8"/>
<rect x="1673" y="355" width="1" height="4" fill="#e8e8e8"/>
<rect x="1683" y="351" width="1" height="8" fill="#e8e8e8"/>
<rect x="1693" y="355" width="1" height="4" fill="#e8e8e8"/>
<rect x="1703" y="355" width="1" height="4" fill="#e8e8e8"/>
<rect x="1713" y="355" width="1" height="4" fill="#e8e8e8"/>
<rect x="1723" y="355" width="1" height="4" fill="#e8e8e8"/>
<rect x="1743" y="355" width="1" height="4" fill="#e8e8e8"/>
<rect x="1753" y="355" width="1" height="4" fill="#e8e8e8"/>
<rect x="1763" y="355" width="1" height="4" fill="#e8e8e8"/>
<rect x="1773" y="355" width="1" height="4" fill="#e8e8e8"/>
<rect x="1783" y="351" width="1" height="8" fill="#e8e8e8"/>
<rect x="1793" y="355" width="1" height="4" fill="#e8e8e8"/>
<rect x="1803" y="355" width="1" height="4" fill="#e8e8e8"/>
<rect x="1813" y="355" width="1" height="4" fill="#e8e8e8"/>
<rect x="1823" y="355" width="1" height="4" fill="#e8e8e8"/>
<rect x="1843" y="355" width="1" height="4" fill="#e8e8e8"/>
<rect x="1853" y="355" width="1" height="4" fill="#e8e8e8"/>
<rect x="1863" y="355" width="1" height="4" fill="#e8e8e8"/>
<text x="535" y="345" font-family="Liberation Sans" font-weight="bold" font-size="13" letter-spacing="0.4" fill="#eee">40</text>
<text x="635" y="345" font-family="Liberation Sans" font-weight="bold" font-size="13" letter-spacing="0.4" fill="#eee">60</text>
<text x="735" y="345" font-family="Liberation Sans" font-weight="bold" font-size="13" letter-spacing="0.4" fill="#eee">80</text>
<text x="835" y="345" font-family="Liberation Sans" font-weight="bold" font-size="13" letter-spacing="0.4" fill="#eee">100</text>
<text x="935" y="345" font-family="Liberation Sans" font-weight="bold" font-size="13" letter-spacing="0.4" fill="#eee">120</text>
<text x="1035" y="345" font-family="Liberation Sans" font-weight="bold" font-size="13" letter-spacing="0.4" fill="#eee">140</text>
<text x="1135" y="345" font-family="Liberation Sans" font-weight="bold" font-size="13" letter-spacing="0.4" fill="#eee">160</text>
<text x="1235" y="345" font-family="Liberation Sans" font-weight="bold" font-size="13" letter-spacing="0.4" fill="#eee">180</text>
<text x="1335" y="345" font-family="Liberation Sans" font-weight="bold" font-size="13" letter-spacing="0.4" fill="#eee">200</text>
<text x="1435" y="345" font-family="Liberation Sans" font-weight="bold" font-size="13" letter-spacing="0.4" fill="#eee">220</text>
<text x="1535" y="345" font-family="Liberation Sans" font-weight="bold" font-size="13" letter-spacing="0.4" fill="#eee">240</text>
<text x="1635" y="345" font-family="Liberation Sans" font-weight="bold" font-size="13" letter-spacing="0.4" fill="#eee">260</text>
<text x="1735" y="345" font-family="Liberation Sans" font-weight="bold" font-size="13" letter-spacing="0.4" fill="#eee">280</text>
<text x="1835" y="345" font-family="Liberation Sans" font-weight="bold" font-size="13" letter-spacing="0.4" fill="#eee">300</text>
<rect x="443" y="896" width="1427" height="1" fill="#c8c8c8"/>
<rect x="443" y="362" width="1427" height="25" fill="#00c800"/>
<rect x="493" y="392" width="20" height="23" fill="#004400"/>
<rect x="573" y="392" width="20" height="23" fill="#004400"/>
<rect x="653" y="392" width="20" height="23" fill="#004400"/>
<rect x="733" y="392" width="20" height="23" fill="#004400"/>
<rect x="813" y="392" width="20" height="23" fill="#004400"/>
<rect x="893" y="392" width="20" height="23" fill="#004400"/>
<rect x="973" y="392" width="20" height="23" fill="#004400"/>
<rect x="1053" y="392" width="20" height="23" fill="#004400"/>
<rect x="1133" y="392" width="20" height="23" fill="#004400"/>
<rect x="1213" y="392" width="20" height="23" fill="#004400"/>
<rect x="1293" y="392" width="20" height="23" fill="#004400"/>
<rect x="1373" y="392" width="20" height="23" fill="#004400"/>
<rect x="1453" y="392" width="20" height="23" fill="#004400"/>
<rect x="1533" y="392" width="20" height="23" fill="#004400"/>
<rect x="1613" y="392" width="20" height="23" fill="#004400"/>
<rect x="1693" y="392" width="20" height="23" fill="#004400"/>
<rect x="1773" y="392" width="20" height="23" fill="#004400"/>
<rect x="1853" y="392" width="20" height="23" fill="#004400"/>
<polyline points="443,415.5 493.5,415.5 493.5,392.5 513.5,392.5 513.5,415.5 573.5,415.5 573.5,392.5 593.5,392.5 593.5,415.5 653.5,415.5 653.5,392.5 673.5,392.5 673.5,415.5 733.5,415.5 733.5,392.5 753.5,392.5 753.5,415.5 813.5,415.5 813.5,392.5 833.5,392.5 833.5,415.5 893.5,415.5 893.5,392.5 913.5,392.5 913.5,415.5 973.5,415.5 973.5,392.5 993.5,392.5 993.5,415.5 1053.5,415.5 1053.5,392.5 1073.5,392.5 1073.5,415.5 1133.5,415.5 1133.5,392.5 1153.5,392.5 1153.5,415.5 1213.5,415.5 1213.5,392.5 1233.5,392.5 1233.5,415.5 1293.5,415.5 1293.5,392.5 1313.5,392.5 1313.5,415.5 1373.5,415.5 1373.5,392.5 1393.5,392.5 1393.5,415.5 1453.5,415.5 1453.5,392.5 1473.5,392.5 1473.5,415.5 1533.5,415.5 1533.5,392.5 1553.5,392.5 1553.5,415.5 1613.5,415.5 1613.5,392.5 1633.5,392.5 1633.5,415.5 1693.5,415.5 1693.5,392.5 1713.5,392.5 1713.5,415.5 1773.5,415.5 1773.5,392.5 1793.5,392.5 1793.5,415.5 1853.5,415.5 1853.5,392.5 1873.5,392.5 1873.5,415.5 1870,415.5" fill="none" stroke="#7abd7a" stroke-width="1"/>
<rect x="443" y="421" width="1427" height="24" fill="#000"/>
<path d="M443 421.5 L489 421.5 L493 433 L489 444.5 L443 444.5 M497 421.5 L569 421.5 L573 433 L569 444.5 L497 444.5 M493 433 L497 421.5 M493 433 L497 444.5 M577 421.5 L649 421.5 L653 433 L649 444.5 L577 444.5 M573 433 L577 421.5 M573 433 L577 444.5 M657 421.5 L729 421.5 L733 433 L729 444.5 L657 444.5 M653 433 L657 421.5 M653 433 L657 444.5 M737 421.5 L809 421.5 L813 433 L809 444.5 L737 444.5 M733 433 L737 421.5 M733 433 L737 444.5 M817 421.5 L889 421.5 L893 433 L889 444.5 L817 444.5 M813 433 L817 421.5 M813 433 L817 444.5 M897 421.5 L969 421.5 L973 433 L969 444.5 L897 444.5 M893 433 L897 421.5 M893 433 L897 444.5 M977 421.5 L1049 421.5 L1053 433 L1049 444.5 L977 444.5 M973 433 L977 421.5 M973 433 L977 444.5 M1057 421.5 L1129 421.5 L1133 433 L1129 444.5 L1057 444.5 M1053 433 L1057 421.5 M1053 433 L1057 444.5 M1137 421.5 L1209 421.5 L1213 433 L1209 444.5 L1137 444.5 M1133 433 L1137 421.5 M1133 433 L1137 444.5 M1217 421.5 L1289 421.5 L1293 433 L1289 444.5 L1217 444.5 M1213 433 L1217 421.5 M1213 433 L1217 444.5 M1297 421.5 L1369 421.5 L1373 433 L1369 444.5 L1297 444.5 M1293 433 L1297 421.5 M1293 433 L1297 444.5 M1377 421.5 L1449 421.5 L1453 433 L1449 444.5 L1377 444.5 M1373 433 L1377 421.5 M1373 433 L1377 444.5 M1457 421.5 L1529 421.5 L1533 433 L1529 444.5 L1457 444.5 M1453 433 L1457 421.5 M1453 433 L1457 444.5 M1537 421.5 L1609 421.5 L1613 433 L1609 444.5 L1537 444.5 M1533 433 L1537 421.5 M1533 433 L1537 444.5 M1617 421.5 L1689 421.5 L1693 433 L1689 444.5 L1617 444.5 M1613 433 L1617 421.5 M1613 433 L1617 444.5 M1697 421.5 L1769 421.5 L1773 433 L1769 444.5 L1697 444.5 M1693 433 L1697 421.5 M1693 433 L1697 444.5 M1777 421.5 L1849 421.5 L1853 433 L1849 444.5 L1777 444.5 M1773 433 L1777 421.5 M1773 433 L1777 444.5 M1857 421.5 L1896 421.5 L1900 433 L1896 444.5 L1857 444.5 M1853 433 L1857 421.5 M1853 433 L1857 444.5" fill="none" stroke="#7abd7a" stroke-width="1"/>
<text x="465" y="435" text-anchor="middle" font-family="Liberation Sans" font-weight="bold" font-size="13" letter-spacing="0.4" fill="#eee">0</text>
<text x="532.0" y="435" text-anchor="middle" font-family="Liberation Sans" font-weight="bold" font-size="13" letter-spacing="0.4" fill="#eee">1</text>
<text x="612.0" y="435" text-anchor="middle" font-family="Liberation Sans" font-weight="bold" font-size="13" letter-spacing="0.4" fill="#eee">2</text>
<text x="692.0" y="435" text-anchor="middle" font-family="Liberation Sans" font-weight="bold" font-size="13" letter-spacing="0.4" fill="#eee">3</text>
<text x="772.0" y="435" text-anchor="middle" font-family="Liberation Sans" font-weight="bold" font-size="13" letter-spacing="0.4" fill="#eee">4</text>
<text x="852.0" y="435" text-anchor="middle" font-family="Liberation Sans" font-weight="bold" font-size="13" letter-spacing="0.4" fill="#eee">5</text>
<text x="932.0" y="435" text-anchor="middle" font-family="Liberation Sans" font-weight="bold" font-size="13" letter-spacing="0.4" fill="#eee">6</text>
<text x="1012.0" y="435" text-anchor="middle" font-family="Liberation Sans" font-weight="bold" font-size="13" letter-spacing="0.4" fill="#eee">7</text>
<text x="1092.0" y="435" text-anchor="middle" font-family="Liberation Sans" font-weight="bold" font-size="13" letter-spacing="0.4" fill="#eee">8</text>
<text x="1172.0" y="435" text-anchor="middle" font-family="Liberation Sans" font-weight="bold" font-size="13" letter-spacing="0.4" fill="#eee">9</text>
<text x="1252.0" y="435" text-anchor="middle" font-family="Liberation Sans" font-weight="bold" font-size="13" letter-spacing="0.4" fill="#eee">10</text>
<text x="1332.0" y="435" text-anchor="middle" font-family="Liberation Sans" font-weight="bold" font-size="13" letter-spacing="0.4" fill="#eee">11</text>
<text x="1412.0" y="435" text-anchor="middle" font-family="Liberation Sans" font-weight="bold" font-size="13" letter-spacing="0.4" fill="#eee">12</text>
<text x="1492.0" y="435" text-anchor="middle" font-family="Liberation Sans" font-weight="bold" font-size="13" letter-spacing="0.4" fill="#eee">13</text>
<text x="1572.0" y="435" text-anchor="middle" font-family="Liberation Sans" font-weight="bold" font-size="13" letter-spacing="0.4" fill="#eee">14</text>
<text x="1652.0" y="435" text-anchor="middle" font-family="Liberation Sans" font-weight="bold" font-size="13" letter-spacing="0.4" fill="#eee">15</text>
<text x="1732.0" y="435" text-anchor="middle" font-family="Liberation Sans" font-weight="bold" font-size="13" letter-spacing="0.4" fill="#eee">0</text>
<text x="1812.0" y="435" text-anchor="middle" font-family="Liberation Sans" font-weight="bold" font-size="13" letter-spacing="0.4" fill="#eee">1</text>
<text x="1861" y="435" text-anchor="middle" font-family="Liberation Sans" font-weight="bold" font-size="13" letter-spacing="0.4" fill="#eee">2</text>
<rect x="1453" y="451" width="320" height="22" fill="#004400"/>
<polyline points="443,473.5 1453.5,473.5 1453.5,450.5 1773.5,450.5 1773.5,473.5 1870,473.5" fill="none" stroke="#7abd7a" stroke-width="1"/>
<rect x="1431.5" y="307.5" width="373" height="200" fill="none" stroke="#dc2a32" stroke-width="3"/>
<rect x="492" y="325" width="2" height="571" fill="#c82828"/>
<rect x="486" y="303" width="14" height="22" rx="1" fill="#dd1414"/>
<text x="493" y="317" text-anchor="middle" font-family="Liberation Serif" font-weight="bold" font-size="10" fill="#500">T</text>
<rect x="443" y="289" width="1" height="607" fill="#e0d050"/>
<rect x="443" y="289" width="22" height="16" fill="#d4ce3e"/>
<text x="445" y="302" font-family="Liberation Sans" font-weight="bold" font-size="13" letter-spacing="0.4" fill="#111">22</text>
<text x="445" y="931" font-family="Liberation Mono" font-weight="bold" font-size="13" letter-spacing="0.18" fill="#f4f4f4">Updated at: 2021-Feb-22 16:35:00</text>
</g></svg>
<div class="a" style="left:60px;top:977px;width:119px;height:29px;background:#fff;border:1px solid #bdbdbd;border-bottom:none;border-radius:3px 3px 0 0"></div>
<div class="t" style="left:69px;top:984.5px;font-size:14.3px;color:#666">Tcl Console</div>
<div class="a" style="left:179px;top:977px;width:119px;height:29px;background:#fff;border:1px solid #bdbdbd;border-bottom:none;border-radius:3px 3px 0 0"></div>
<div class="t" style="left:188px;top:984.5px;font-size:14.3px;color:#666">Messages</div>
<div class="a" style="left:298px;top:977px;width:119px;height:29px;background:#fff;border:1px solid #bdbdbd;border-bottom:none;border-radius:3px 3px 0 0"></div>
<div class="t" style="left:307px;top:984.5px;font-size:14.3px;color:#666">Serial I/O Links</div>
<div class="a" style="left:417px;top:977px;width:120px;height:29px;background:#fff;border:1px solid #bdbdbd;border-bottom:none;border-radius:3px 3px 0 0"></div>
<div class="t" style="left:426px;top:984.5px;font-size:14.3px;color:#666">Serial I/O Scans</div>
<div class="a" style="left:0;top:1005px;width:1920px;height:25px;background:#eeeeee"></div>
<div class="t" style="left:1790px;top:1013px;font-size:13px;letter-spacing:0.62px;color:#111;font-family:'Liberation Serif',serif">www.mfgrobots.com</div>
</body></html>
